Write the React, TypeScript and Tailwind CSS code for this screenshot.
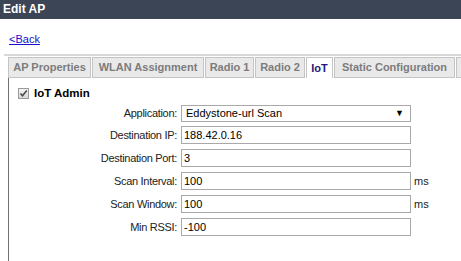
const tabs = [
  { label: "AP Properties", w: "w-[83px]" },
  { label: "WLAN Assignment", w: "w-[112px]" },
  { label: "Radio 1", w: "w-[49px]" },
  { label: "Radio 2", w: "w-[50px]" },
  { label: "IoT", w: "w-[27px]", active: true },
  { label: "Static Configuration", w: "w-[121px]" },
  { label: "", w: "w-[20px]" },
];

const fields = [
  { label: "Destination IP:", value: "188.42.0.16" },
  { label: "Destination Port:", value: "3" },
  { label: "Scan Interval:", value: "100", unit: "ms" },
  { label: "Scan Window:", value: "100", unit: "ms" },
  { label: "Min RSSI:", value: "-100" },
];

export default function App() {
  return (
    <div className="w-[461px] h-[261px] bg-white overflow-hidden font-['Liberation_Sans',Arial,sans-serif]">
      {/* Title bar */}
      <div className="h-[19px] bg-[#3b4555] pl-[3px] text-white font-bold text-[12px] leading-[19px]">
        Edit AP
      </div>

      {/* Back link */}
      <div className="mt-[14px] pl-[9px] text-[11px] leading-[13px]">
        <a href="#" className="text-[#1a0dcc] underline">
          &lt;Back
        </a>
      </div>

      <div className="mt-[8px] ml-[4px] h-[2px] bg-[#d8d8d8]" />

      {/* Tabs */}
      <div className="mt-[1px] ml-[8px] flex gap-[1px]">
        {tabs.map((t, i) =>
          t.active ? (
            <div
              key={i}
              className={`${t.w} h-[21px] shrink-0 border border-b-0 border-[#c4c4c4] bg-white text-[11px] font-bold leading-[20px] text-center text-[#1d1a7a]`}
            >
              {t.label}
            </div>
          ) : (
            <div
              key={i}
              className={`${t.w} h-[21px] shrink-0 border border-[#c4c4c4] bg-[#e9e9e9] text-[11px] font-bold leading-[19px] text-center text-[#7c7c7c] whitespace-nowrap overflow-hidden`}
            >
              {t.label}
            </div>
          )
        )}
      </div>

      {/* Panel */}
      <div className="ml-[8px] h-[200px] border-l border-[#707070] pt-[8px]">
        <div className="flex items-center pl-[9px]">
          <span className="w-[11px] h-[11px] border border-[#9a9a9a] bg-gradient-to-b from-[#f4f4f4] to-[#d8d8d8] flex items-center justify-center">
            <svg width="9" height="9" viewBox="0 0 9 9">
              <path d="M1.5 4.5 L3.5 6.8 L7.8 1.5" stroke="#4a4a4a" strokeWidth="1.6" fill="none" />
            </svg>
          </span>
          <span className="ml-[5px] text-[11.5px] font-bold text-black leading-[14px]">IoT Admin</span>
        </div>

        <div className="mt-[5px] flex flex-col">
          <div className="flex items-center">
            <div className="w-[168px] text-right text-[11px] tracking-[-0.3px] text-[#222]">Application:</div>
            <div className="ml-[4px] w-[230px] h-[17px] border border-[#a9a9a9] flex items-center justify-between pl-[4px] pr-[6px] text-[11px] text-black">
              <span>Eddystone-url Scan</span>
              <span className="text-[9px] leading-none">▼</span>
            </div>
          </div>

          {fields.map((f, i) => (
            <div key={f.label} className={`flex items-center ${i === 0 ? "mt-[4px]" : "mt-[5px]"}`}>
              <div className="w-[168px] text-right text-[11px] tracking-[-0.3px] text-[#222]">{f.label}</div>
              <input
                readOnly
                value={f.value}
                className="ml-[4px] w-[230px] h-[18px] border border-[#a9a9a9] px-[2px] text-[11px] text-black outline-none font-['Liberation_Sans',Arial,sans-serif]"
              />
              {f.unit && <span className="ml-[3px] text-[11px] text-[#222]">{f.unit}</span>}
            </div>
          ))}
        </div>
      </div>
    </div>
  );
}
